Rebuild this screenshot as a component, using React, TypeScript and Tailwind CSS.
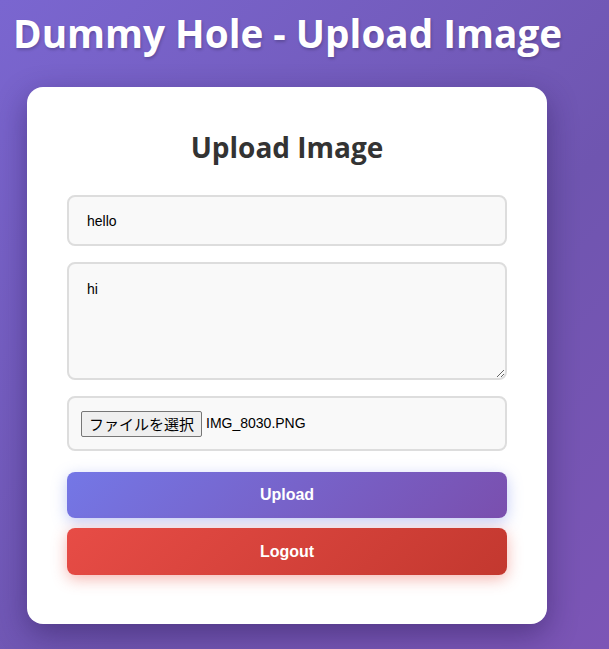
import { useState } from 'react';

export default function App() {
  const [title, setTitle] = useState('hello');
  const [body, setBody] = useState('hi');

  return (
    <div className="min-h-[649px] w-full bg-[linear-gradient(135deg,#7a66d0_0%,#6f55b0_60%,#7c55b6_100%)] font-['Open_Sans','Noto_Sans',sans-serif]">
      <h1 className="m-0 pl-[13px] pt-[8px] text-[38.7px] font-bold leading-[50px] text-white [text-shadow:1px_2px_3px_rgba(0,0,0,0.2)]">
        Dummy Hole - Upload Image
      </h1>

      <div className="ml-[27px] mt-[29px] w-[520px] rounded-2xl bg-white px-10 pb-[49px] pt-[38px] shadow-[0_10px_30px_rgba(40,20,80,0.45)]">
        <h2 className="m-0 text-center text-[28px] font-bold leading-[44px] text-[#333]">Upload Image</h2>

        <form className="mt-[26px] flex flex-col" onSubmit={(e) => e.preventDefault()}>
          <input
            value={title}
            onChange={(e) => setTitle(e.target.value)}
            className="h-[51px] w-full rounded-lg border-2 border-[#ddd] bg-[#f9f9f9] px-[18px] font-['Liberation_Sans',Arial,sans-serif] text-[14px] text-black outline-none"
          />

          <textarea
            value={body}
            onChange={(e) => setBody(e.target.value)}
            className="mt-[16px] h-[118px] w-full resize-y rounded-lg border-2 border-[#ddd] bg-[#f9f9f9] px-[18px] py-[15px] font-['Liberation_Sans',Arial,sans-serif] text-[14px] text-black outline-none"
          />

          {/* file picker row */}
          <div className="mt-[16px] flex h-[55px] w-full items-center rounded-lg border-2 border-[#ddd] bg-[#f9f9f9] pl-3 font-['Liberation_Sans',Arial,sans-serif] text-[14px] text-black">
            <span className="flex h-[26px] items-center rounded-[2px] border border-[#767676] bg-[#efefef] px-[7px] font-['Noto_Sans_CJK_JP',sans-serif] text-[15px] leading-none">
              ファイルを選択
            </span>
            <span className="ml-[4px]">IMG_8030.PNG</span>
          </div>

          <button
            type="submit"
            className="mt-[21px] h-[46px] w-full rounded-lg bg-[linear-gradient(135deg,#7477e6_0%,#7a4fae_100%)] font-['Liberation_Sans',Arial,sans-serif] text-[16px] font-bold text-white shadow-[0_4px_15px_rgba(102,126,234,0.4)]"
          >
            Upload
          </button>

          <button
            type="button"
            className="mt-[10px] h-[47px] w-full rounded-lg bg-[linear-gradient(135deg,#e74c46_0%,#c3382f_100%)] font-['Liberation_Sans',Arial,sans-serif] text-[16px] font-bold text-white shadow-[0_4px_15px_rgba(231,76,60,0.4)]"
          >
            Logout
          </button>
        </form>
      </div>
    </div>
  );
}
